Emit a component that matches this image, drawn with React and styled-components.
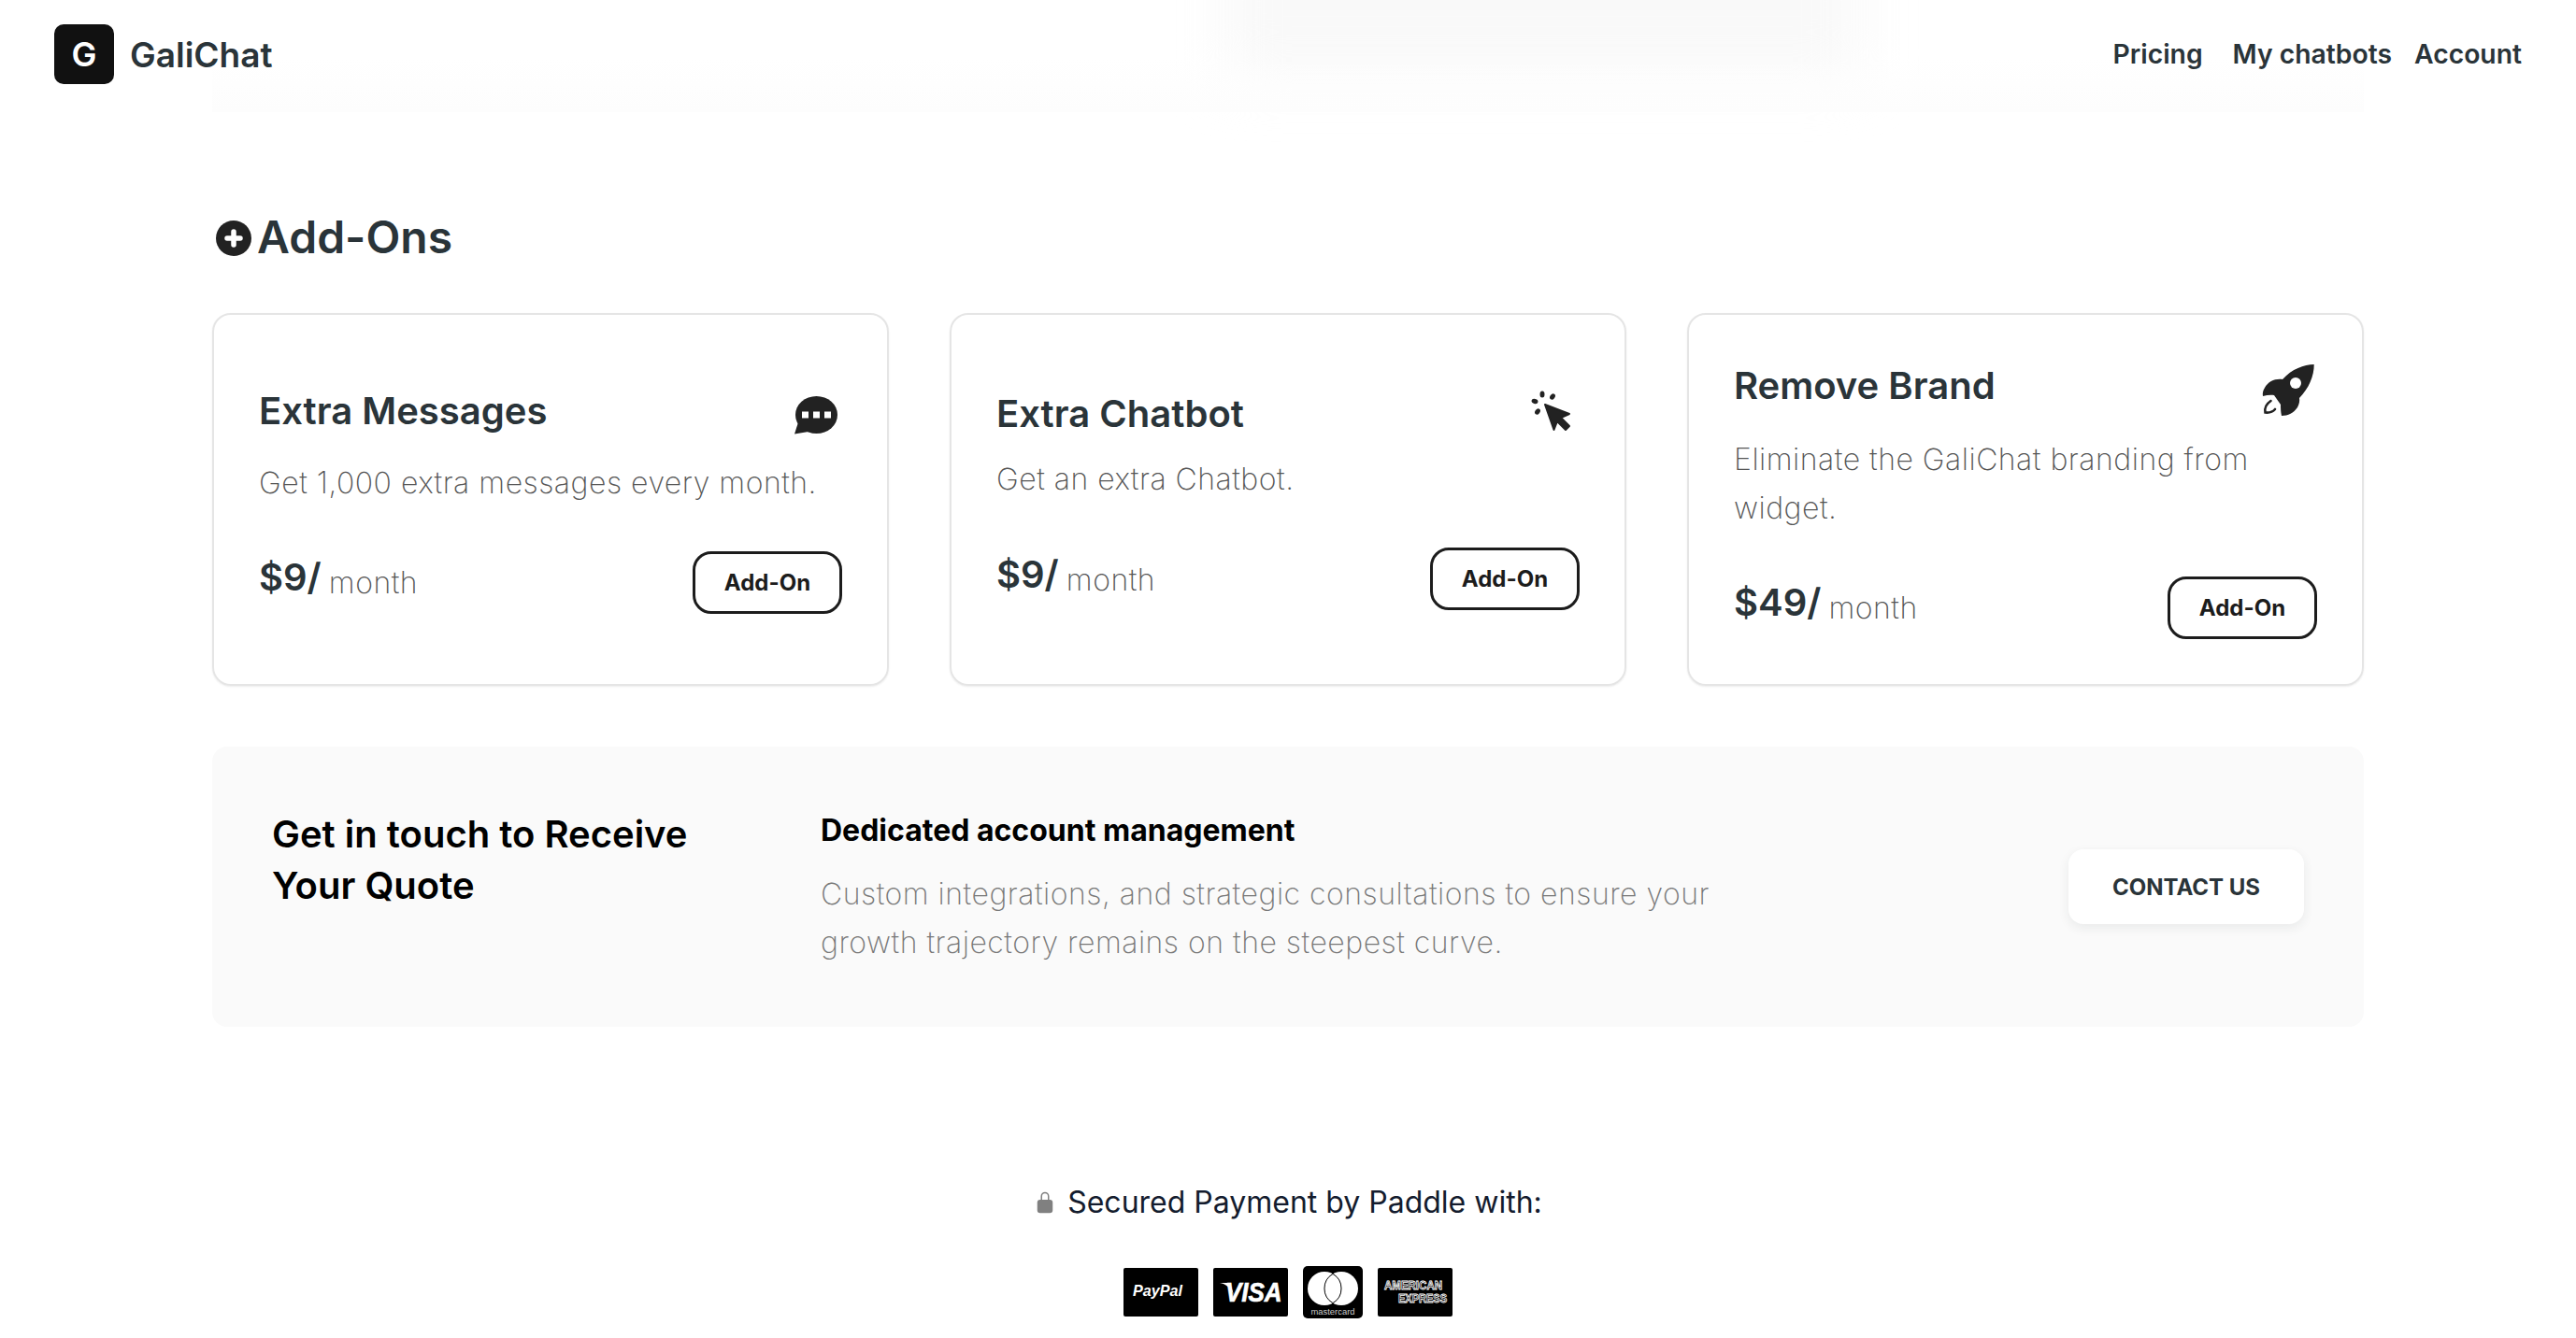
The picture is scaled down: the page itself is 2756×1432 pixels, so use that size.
import styled, { createGlobalStyle } from "styled-components";
import { IoLockClosed } from "react-icons/io5";

function PlusIcon() {
  return (
    <svg width="48" height="48" viewBox="0 0 48 48">
      <circle cx="23" cy="25" r="19" fill="#222" />
      <path d="M23 18v14M16 25h14" stroke="#fff" strokeWidth="5.500" strokeLinecap="round" />
    </svg>
  );
}

function ChatIcon() {
  return (
    <svg width="56" height="56" viewBox="0 0 56 56">
      <path d="M5 48.500 9 36 20 46z" fill="#222" />
      <ellipse cx="28.500" cy="28" rx="22.500" ry="20" fill="#222" />
      <g fill="#fff">
        <rect x="13" y="24.500" width="7" height="7" />
        <rect x="25" y="24.500" width="7" height="7" />
        <rect x="37" y="24.500" width="7" height="7" />
      </g>
    </svg>
  );
}

function CursorIcon() {
  return (
    <svg width="56" height="56" viewBox="0 0 56 56" fill="#222">
      <path
        d="M19 17 45 27 36 31 45 40 41 44 32 35 28.500 44z"
        stroke="#222"
        strokeWidth="2"
        strokeLinejoin="round"
      />
      <ellipse cx="16" cy="6" rx="2.500" ry="3.500" />
      <ellipse cx="27" cy="8.500" rx="2.500" ry="3.500" transform="rotate(35 27 8.500)" />
      <ellipse cx="8" cy="13.500" rx="3.500" ry="2.500" transform="rotate(15 8 13.500)" />
      <ellipse cx="11" cy="24.500" rx="2.500" ry="3.500" transform="rotate(35 11 24.500)" />
    </svg>
  );
}

function RocketIcon() {
  return (
    <svg width="64" height="64" viewBox="25 15 64 64">
      <path
        d="M85.700 19C75 19 62 24 52 35 44 34 37 37 33 44 31 47 30.500 50 31 53 35 52 39 51.500 43 52L50 62C50 65 50 70 51 74 58 74 64 71 68 65 70 61 70.500 58 70 55 80 45 86 31 85.700 19z"
        fill="#222"
      />
      <circle cx="66" cy="39" r="6" fill="#fff" />
      <path
        d="M39.500 58C35 61 32.500 66 33.500 70.500 38 71 41.500 70 44 67"
        fill="none"
        stroke="#222"
        strokeWidth="2.600"
        strokeLinecap="round"
      />
    </svg>
  );
}

const addOns = [
  {
    name: "Extra Messages",
    text: "Get 1,000 extra messages every month.",
    price: "$9/",
    head: 62,
    icon: <ChatIcon />,
  },
  {
    name: "Extra Chatbot",
    text: "Get an extra Chatbot.",
    price: "$9/",
    head: 55,
    icon: <CursorIcon />,
  },
  {
    name: "Remove Brand",
    text: "Eliminate the GaliChat branding from widget.",
    price: "$49/",
    head: 64,
    icon: <RocketIcon />,
  },
];

const PayPalLogo = () => (
  <svg width="80" height="52" viewBox="0 0 80 52">
    <rect width="80" height="52" rx="2" fill="#000" />
    <text x="10" y="30" fill="#fff" fontFamily="Liberation Sans" fontSize="17" fontWeight="700" fontStyle="italic" textLength="53" lengthAdjust="spacingAndGlyphs">
      PayPal
    </text>
  </svg>
);

const VisaLogo = () => (
  <svg width="80" height="52" viewBox="0 0 80 52">
    <rect width="80" height="52" rx="2" fill="#000" />
    <path d="M7 16c6 1 12 5 15 13l-4-13z" fill="#fff" />
    <text x="13" y="31.300" transform="scale(1 1.150)" fill="#fff" stroke="#fff" strokeWidth="0.600" fontFamily="Liberation Sans" fontSize="26" fontWeight="700" fontStyle="italic">
      VISA
    </text>
  </svg>
);

const MastercardLogo = () => (
  <svg width="64" height="56" viewBox="0 0 64 56">
    <rect width="64" height="56" rx="5" fill="#000" />
    <circle cx="23" cy="24" r="18" fill="#fff" />
    <circle cx="41" cy="24" r="18" fill="#fff" />
    <path d="M32 8.400A18 18 0 0 1 32 39.600 18 18 0 0 1 32 8.400z" fill="#fff" stroke="#000" strokeWidth="1" />
    <text x="32" y="52" fill="#ccc" textAnchor="middle" fontFamily="Liberation Sans" fontSize="8.500" textLength="47" lengthAdjust="spacingAndGlyphs">
      mastercard
    </text>
  </svg>
);

const AmexLogo = () => (
  <svg width="80" height="52" viewBox="0 0 80 52">
    <rect width="80" height="52" rx="2" fill="#000" />
    <g fill="#000" stroke="#fff" strokeWidth="0.800" fontFamily="Liberation Sans" fontSize="12" fontWeight="700">
      <text x="7" y="23" textLength="62" lengthAdjust="spacingAndGlyphs">AMERICAN</text>
      <text x="22" y="37" textLength="52" lengthAdjust="spacingAndGlyphs">EXPRESS</text>
    </g>
  </svg>
);

const App = () => {
  return (
    <Page>
      <GlobalStyle />
      <Header>
        <Brand>
          <BrandMark>G</BrandMark>
          <BrandName>GaliChat</BrandName>
        </Brand>
        <Nav>
          <NavLink $spaced>Pricing</NavLink>
          <NavLink>My chatbots</NavLink>
          <NavLink>Account</NavLink>
        </Nav>
      </Header>

      <Main>
        <SectionTitle>
          <PlusIcon />
          Add-Ons
        </SectionTitle>

        <CardGrid>
          {addOns.map((item) => (
            <Card key={item.name}>
              <CardHead $height={item.head}>
                <CardName>{item.name}</CardName>
                {item.icon}
              </CardHead>
              <CardText>{item.text}</CardText>
              <CardFoot>
                <Price>
                  {item.price} <Period>month</Period>
                </Price>
                <AddButton>Add-On</AddButton>
              </CardFoot>
            </Card>
          ))}
        </CardGrid>

        <QuotePanel>
          <QuoteTitle>Get in touch to Receive Your Quote</QuoteTitle>
          <QuoteBody>
            <QuoteLead>Dedicated account management</QuoteLead>
            <QuoteText>
              Custom integrations, and strategic consultations to ensure your
              growth trajectory remains on the steepest curve.
            </QuoteText>
          </QuoteBody>
          <ContactButton>CONTACT US</ContactButton>
        </QuotePanel>
      </Main>

      <Footer>
        <Secured>
          <IoLockClosed size={24} color="#808080" />
          Secured Payment by Paddle with:
        </Secured>
        <Logos>
          <PayPalLogo />
          <VisaLogo />
          <MastercardLogo />
          <AmexLogo />
        </Logos>
      </Footer>
    </Page>
  );
};

const GlobalStyle = createGlobalStyle`
  body {
    margin: 0;
    background: #fff;
    font-family: Inter, "Liberation Sans", sans-serif;
  }
`;

const Page = styled.div`
  width: 2756px;
  height: 1432px;
  overflow: hidden;
  position: relative;
`;

const Header = styled.header`
  position: relative;
  height: 200px;
  padding: 26px 58px 0;
  box-sizing: border-box;
  display: flex;
  justify-content: space-between;
  align-items: flex-start;

  &::before {
    content: "";
    position: absolute;
    left: 1310px;
    top: -70px;
    width: 680px;
    height: 150px;
    background: #f9f9f9;
    filter: blur(30px);
    pointer-events: none;
  }

  &::after {
    content: "";
    position: absolute;
    left: 227px;
    top: 60px;
    width: 2302px;
    height: 60px;
    background: linear-gradient(rgba(253, 253, 253, 0), #fdfdfd);
    pointer-events: none;
  }
`;

const Brand = styled.div`
  position: relative;
  z-index: 1;
  display: flex;
  align-items: center;
  gap: 17px;
`;

const BrandMark = styled.div`
  width: 64px;
  height: 64px;
  border-radius: 10px;
  background: #111;
  color: #fff;
  font-size: 36px;
  font-weight: 600;
  display: flex;
  align-items: center;
  justify-content: center;
`;

const BrandName = styled.span`
  font-size: 37px;
  font-weight: 600;
  color: #2a3439;
`;

const Nav = styled.nav`
  position: relative;
  z-index: 1;
  display: flex;
  gap: 24px;
  height: 64px;
  align-items: center;
`;

const NavLink = styled.a`
  font-size: 28.3px;
  font-weight: 600;
  color: #2a3439;
  margin-right: ${(props) => (props.$spaced ? "8px" : "0")};
`;

const Main = styled.main`
  width: 2302px;
  margin: 0 auto;
`;

const SectionTitle = styled.h2`
  margin: 0 0 46px;
  height: 70px;
  padding-top: 19px;
  display: flex;
  align-items: center;
  font-size: 48px;
  line-height: 70px;
  font-weight: 600;
  color: #2a3439;
`;

const CardGrid = styled.div`
  display: grid;
  grid-template-columns: repeat(3, 724px);
  gap: 65px;
`;

const Card = styled.div`
  box-sizing: border-box;
  height: 399px;
  padding: 48px;
  border: 2px solid #e5e5e5;
  border-radius: 20px;
  box-shadow: 0 1px 2px rgba(0, 0, 0, 0.08);
  display: flex;
  flex-direction: column;
  justify-content: center;
`;

const CardHead = styled.div`
  height: ${(props) => props.$height}px;
  display: flex;
  justify-content: space-between;
  align-items: center;
`;

const CardName = styled.h3`
  margin: 2px 0 0;
  align-self: flex-start;
  font-size: 40px;
  font-weight: 600;
  color: #2a3439;
`;

const CardText = styled.p`
  margin: 16px 0 47px;
  font-size: 32px;
  line-height: 52px;
  font-weight: 200;
  letter-spacing: 0.5px;
  color: #555;
`;

const CardFoot = styled.div`
  display: flex;
  justify-content: space-between;
  align-items: center;
`;

const Price = styled.div`
  margin-bottom: 10px;
  font-size: 40px;
  font-weight: 600;
  color: #2a3439;
`;

const Period = styled.span`
  margin-left: -2px;
  vertical-align: -3px;
  font-size: 32px;
  font-weight: 200;
  letter-spacing: 0.5px;
  color: #555;
`;

const AddButton = styled.button`
  width: 160px;
  height: 67px;
  background: #fff;
  border: 3px solid #1c1c1c;
  border-radius: 20px;
  font-family: inherit;
  font-size: 24px;
  font-weight: 700;
  color: #1c1c1c;
`;

const QuotePanel = styled.section`
  margin-top: 65px;
  height: 300px;
  box-sizing: border-box;
  padding: 64px;
  background: #fafafa;
  border-radius: 16px;
  display: grid;
  grid-template-columns: 587px 1fr 252px;
`;

const QuoteTitle = styled.h3`
  margin: 2px 0 0;
  width: 470px;
  font-size: 40px;
  line-height: 55px;
  font-weight: 600;
  color: #000;
`;

const QuoteBody = styled.div`
  margin-top: 5px;
  display: flex;
  flex-direction: column;
  gap: 21px;
`;

const QuoteLead = styled.div`
  font-size: 32px;
  line-height: 42px;
  font-weight: 700;
  color: #000;
`;

const QuoteText = styled.p`
  margin: 0;
  width: 970px;
  font-size: 32px;
  line-height: 52px;
  font-weight: 200;
  letter-spacing: 0.5px;
  color: #777;
`;

const ContactButton = styled.button`
  align-self: center;
  width: 252px;
  height: 80px;
  background: #fff;
  border: 0;
  border-radius: 16px;
  box-shadow: 0 4px 12px rgba(42, 52, 57, 0.08);
  font-family: inherit;
  font-size: 24px;
  font-weight: 700;
  color: #2a3439;
`;

const Footer = styled.footer`
  margin-top: 162px;
  display: flex;
  flex-direction: column;
  align-items: center;
  gap: 42px;
`;

const Secured = styled.div`
  display: flex;
  align-items: center;
  gap: 12px;
  font-size: 32px;
  line-height: 52px;
  color: #141c2e;
`;

const Logos = styled.div`
  display: flex;
  align-items: center;
  gap: 16px;
`;

export default App;
